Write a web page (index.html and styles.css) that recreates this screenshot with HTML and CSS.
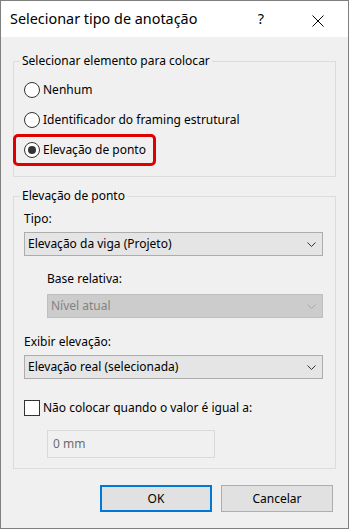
FILE: index.html
```html
<!DOCTYPE html>
<html>
<head>
<meta charset=utf-8>
<title>Selecionar tipo de anotação</title>
<link rel="stylesheet" href="styles.css">
</head>
<body>
<div class="window">
  <div class="titlebar">
    <span class="title">Selecionar tipo de anotação</span>
    <span class="help">?</span>
    <svg class="close" width="12" height="12" viewBox="0 0 12 12"><path d="M0.5 0.5L11.5 11.5M11.5 0.5L0.5 11.5" stroke="#000" stroke-width="1" fill="none"/></svg>
  </div>

  <div class="content">
    <div class="group group-element">
      <div class="group-title">Selecionar elemento para colocar</div>
      <div class="radio-row first"><span class="radio"></span>Nenhum</div>
      <div class="radio-row"><span class="radio"></span>Identificador do framing estrutural</div>
      <div class="radio-row"><span class="marked"><span class="radio checked"></span>Elevação de ponto</span></div>
    </div>

    <div class="group group-point">
      <div class="group-title">Elevação de ponto</div>
      <div class="field-label label-type">Tipo:</div>
      <div class="select">
        <span>Elevação da viga (Projeto)</span>
        <svg class="chevron" width="9" height="5" viewBox="0 0 9 5"><path d="M0.5 0.5L4.5 4.5L8.5 0.5" stroke="#333" fill="none"/></svg>
      </div>
      <div class="field-label indent label-base">Base relativa:</div>
      <div class="select indent disabled">
        <span>Nível atual</span>
        <svg class="chevron" width="9" height="5" viewBox="0 0 9 5"><path d="M0.5 0.5L4.5 4.5L8.5 0.5" stroke="#a8a8a8" fill="none"/></svg>
      </div>
      <div class="field-label label-show">Exibir elevação:</div>
      <div class="select">
        <span>Elevação real (selecionada)</span>
        <svg class="chevron" width="9" height="5" viewBox="0 0 9 5"><path d="M0.5 0.5L4.5 4.5L8.5 0.5" stroke="#333" fill="none"/></svg>
      </div>
      <div class="check-row"><span class="checkbox"></span>Não colocar quando o valor é igual a:</div>
      <div class="textbox">0 mm</div>
    </div>

    <div class="buttons">
      <div class="btn default">OK</div>
      <div class="btn">Cancelar</div>
    </div>
  </div>
</div>
</body>
</html>
```

FILE: styles.css
```css
html, body
{
	margin:0;
	padding:0;
	background-color:#fff;
	font-family:"Noto Sans", "Open Sans", sans-serif;
	font-size:12px;
	line-height:16px;
	color:#000;
}
.window
{
	width:349px;
	height:529px;
	box-sizing:border-box;
	border:1px solid #7f7f7f;
	background-color:#f0f0f0;
	display:flex;
	flex-direction:column;
	overflow:hidden;
}
.titlebar
{
	flex:none;
	height:36px;
	background-color:#fff;
	display:flex;
	align-items:center;
	padding:0 24px 0 9px;
}
.title
{
	flex:1;
	font-size:14.4px;
	line-height:18px;
}
.help
{
	font-size:14.4px;
	line-height:18px;
	margin-right:48px;
}
.close { display:block; margin-top:3px; }

.content
{
	flex:none;
	padding:24px 12px 0 12px;
	display:flex;
	flex-direction:column;
}

/* group box: the title sits on the top border */
.group
{
	border:1px solid #dcdcdc;
	padding:0 12px 10px 10px;
	display:flex;
	flex-direction:column;
}
.group-title
{
	align-self:flex-start;
	height:16px;
	margin:-9px 0 0 -4px;
	padding:0 2px;
	background-color:#f0f0f0;
}
.group-element { padding-bottom:11px; }
.group-point { margin-top:19px; }

.radio-row
{
	height:30px;
	display:flex;
	align-items:center;
}
.radio-row.first { margin-top:6px; }
.radio
{
	width:14px;
	height:14px;
	border:1px solid #333;
	border-radius:50%;
	background-color:#fff;
	margin-right:3px;
	display:flex;
	align-items:center;
	justify-content:center;
	flex:none;
}
.radio.checked:after
{
	content:"";
	width:8px;
	height:8px;
	border-radius:50%;
	background-color:#333;
}
.marked
{
	display:flex;
	align-items:center;
	position:relative;
}
/* red highlight drawn over the selected option */
.marked:before
{
	content:"";
	position:absolute;
	left:-11px;
	right:-10px;
	top:-8px;
	bottom:-8px;
	border:3px solid #e00000;
	border-radius:5px;
}

.field-label { height:16px; }
.label-type { margin-top:7px; }
.label-base { margin-top:15px; }
.label-show { margin-top:16px; }
.indent { margin-left:23px; }

.select
{
	height:24px;
	box-sizing:border-box;
	margin-top:5px;
	border:1px solid #adadad;
	background-color:#e5e5e5;
	display:flex;
	align-items:center;
	justify-content:space-between;
	padding:0 6px 0 3px;
}
.select.disabled
{
	margin-top:7px;
	background-color:#cccccc;
	border-color:#bfbfbf;
	color:#838383;
}
.chevron { display:block; }

.check-row
{
	margin-top:21px;
	height:16px;
	display:flex;
	align-items:center;
}
.checkbox
{
	width:14px;
	height:14px;
	border:1px solid #333;
	background-color:#fff;
	margin-right:3px;
	flex:none;
}
.textbox
{
	margin:14px 0 0 23px;
	width:168px;
	height:28px;
	box-sizing:border-box;
	border:1px solid #d9d9d9;
	padding:0 5px;
	display:flex;
	align-items:center;
	color:#6d6d6d;
}

.buttons
{
	margin-top:16px;
	display:flex;
	justify-content:flex-end;
	gap:9px;
	padding-right:3px;
}
.btn
{
	width:112px;
	height:27px;
	box-sizing:border-box;
	border:1px solid #adadad;
	background-color:#e1e1e1;
	display:flex;
	align-items:center;
	justify-content:center;
}
.btn.default { border:2px solid #0078d7; }
```
